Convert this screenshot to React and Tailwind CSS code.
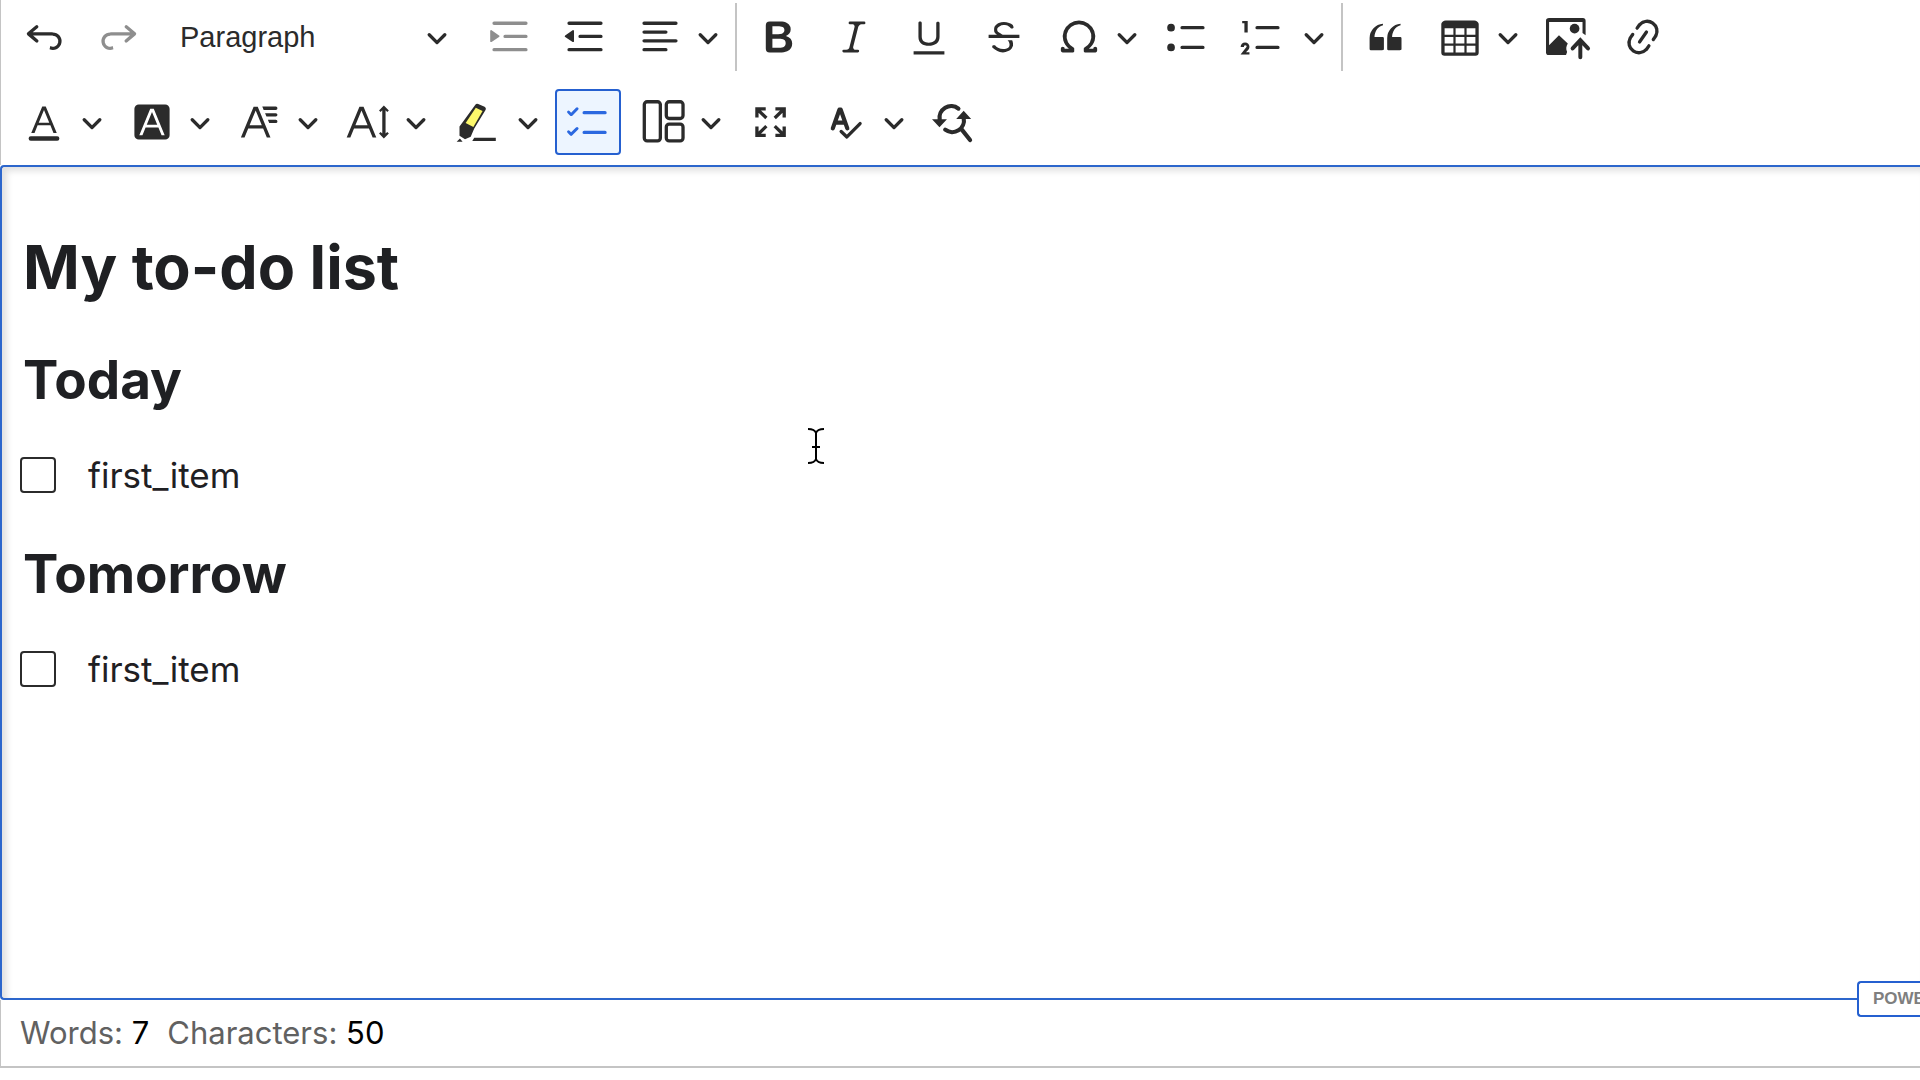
import React, { useState } from "react";

const LINE_TOP = "M2.75 3h14.5a.75.75 0 1 1 0 1.5H2.75a.75.75 0 0 1 0-1.5z";

const icons = {
  undo: "m5.042 9.367 2.189 1.837a.75.75 0 0 1-.965 1.149l-3.788-3.18a.747.747 0 0 1-.21-.284.75.75 0 0 1 .17-.945L6.23 4.762a.75.75 0 1 1 .964 1.15L4.863 7.866h8.917A.75.75 0 0 1 14 7.9a4 4 0 1 1-1.477 7.718l.344-1.489a2.5 2.5 0 1 0 1.094-4.73l.008-.032H5.042z",
  redo: "m14.958 9.367-2.189 1.837a.75.75 0 0 0 .965 1.149l3.788-3.18a.747.747 0 0 0 .21-.284.75.75 0 0 0-.17-.945L13.77 4.762a.75.75 0 1 0-.964 1.15l2.331 1.955H6.22A.75.75 0 0 0 6 7.9a4 4 0 1 0 1.477 7.718l-.344-1.489A2.5 2.5 0 1 1 6.039 9.4l-.008-.032h8.927z",
  indent: LINE_TOP + "M7.75 9h9.5a.75.75 0 1 1 0 1.5h-9.5a.75.75 0 0 1 0-1.5zM2.75 15h14.5a.75.75 0 1 1 0 1.5H2.75a.75.75 0 0 1 0-1.5zM1.632 6.95 5.02 9.358a.4.4 0 0 1-.013.661l-3.39 2.207A.4.4 0 0 1 1 11.892V7.275a.4.4 0 0 1 .632-.326z",
  outdent: LINE_TOP + "M7.75 9h9.5a.75.75 0 1 1 0 1.5h-9.5a.75.75 0 0 1 0-1.5zM2.75 15h14.5a.75.75 0 1 1 0 1.5H2.75a.75.75 0 0 1 0-1.5zM4.368 6.95.98 9.358a.4.4 0 0 0 .013.661l3.39 2.207A.4.4 0 0 0 5 11.892V7.275a.4.4 0 0 0-.632-.326z",
  alignLeft: LINE_TOP + "M2.75 7h9.93a.75.75 0 1 1 0 1.5H2.75a.75.75 0 0 1 0-1.5zM2.75 11h14.5a.75.75 0 1 1 0 1.5H2.75a.75.75 0 0 1 0-1.5zM2.75 15h9.93a.75.75 0 1 1 0 1.5H2.75a.75.75 0 0 1 0-1.5z",
  bold: "M10.187 17H5.773c-.637 0-1.092-.138-1.364-.415-.273-.277-.409-.718-.409-1.323V4.738c0-.617.14-1.062.419-1.332.279-.27.73-.406 1.354-.406h4.68c.69 0 1.288.041 1.793.124.506.083.96.242 1.36.478.341.197.644.447.906.75a3.262 3.262 0 0 1 .808 2.162c0 1.401-.722 2.426-2.167 3.075C15.05 10.175 16 11.315 16 13.01a3.756 3.756 0 0 1-2.296 3.504 6.1 6.1 0 0 1-1.517.377c-.571.073-1.238.11-2 .11zm-.217-6.217H7v4.087h3.069c1.977 0 2.965-.69 2.965-2.072 0-.707-.256-1.22-.768-1.537-.512-.319-1.277-.478-2.296-.478zM7 5.13v3.619h2.606c.729 0 1.292-.067 1.69-.2a1.6 1.6 0 0 0 .91-.765c.165-.267.247-.566.247-.897 0-.707-.26-1.176-.778-1.409-.519-.232-1.31-.348-2.375-.348H7z",
  italic: "m9.586 14.633.021.004c-.036.335.095.655.393.962.082.083.173.15.274.201h1.474a.6.6 0 1 1 0 1.2H5.304a.6.6 0 0 1 0-1.2h1.15c.474-.07.809-.182 1.005-.334.157-.122.291-.32.404-.597l2.416-9.55a1.053 1.053 0 0 0-.281-.823 1.12 1.12 0 0 0-.442-.296H8.15a.6.6 0 0 1 0-1.2h6.443a.6.6 0 1 1 0 1.2h-1.195c-.376.056-.65.155-.823.296-.215.175-.423.439-.623.79l-2.366 9.347z",
  underline: "M3 18v-1.5h14V18zM5.2 10V3.6c0-.4.4-.6.8-.6.3 0 .7.2.7.6v6.2c0 2 1.3 2.8 3.2 2.8 1.9 0 3.4-.9 3.4-2.9V3.6c0-.3.4-.5.8-.5.3 0 .7.2.7.5V10c0 2.7-2.2 4-4.9 4-2.6 0-4.7-1.2-4.7-4z",
  strikethrough: "M7 16.4c-.8-.4-1.5-.9-2.2-1.5a.6.6 0 0 1-.2-.5l.3-.6h1c1 1.2 2.1 1.7 3.7 1.7 1 0 1.8-.3 2.3-.6.6-.4.6-1.2.6-1.3.2-1.2-.9-2.1-.9-2.1h2.1c.3.7.4 1.2.4 1.7v.8l-.6 1.2c-.6.8-1.1 1-1.6 1.2a6 6 0 0 1-2.4.6c-1 0-1.8-.3-2.5-.6zM6.8 9 6 8.3c-.4-.5-.5-.8-.5-1.6 0-.7.1-1.3.5-1.8.4-.6 1-1 1.6-1.3a6.3 6.3 0 0 1 4.7 0 4 4 0 0 1 1.7 1l.3.7c0 .1.2.4-.2.7-.4.2-.9.1-1 0a3 3 0 0 0-1.2-1c-.4-.2-1-.3-2-.4-.7 0-1.4.2-2 .6-.8.6-1 .8-1 1.5 0 .8.5 1 1.2 1.5.6.4 1.1.7 1.9 1H6.8zM3 10.5V9h14v1.5z",
  omega: "M10 2.5a7.47 7.47 0 0 1 4.231 1.31 7.268 7.268 0 0 1 2.703 3.454 7.128 7.128 0 0 1 .199 4.353c-.39 1.436-1.475 2.72-2.633 3.677h2.013c0-.226.092-.443.254-.603a.876.876 0 0 1 1.229 0c.163.16.254.377.254.603v.853c0 .209-.078.41-.22.567a.873.873 0 0 1-.547.28l-.101.006h-4.695a.517.517 0 0 1-.516-.518v-1.265c0-.21.128-.398.317-.489a5.601 5.601 0 0 0 2.492-2.371 5.459 5.459 0 0 0 .552-3.693 5.53 5.53 0 0 0-1.955-3.2A5.71 5.71 0 0 0 10 4.206 5.708 5.708 0 0 0 6.419 5.46 5.527 5.527 0 0 0 4.46 8.663a5.457 5.457 0 0 0 .554 3.695 5.6 5.6 0 0 0 2.497 2.37.55.55 0 0 1 .317.49v1.264c0 .286-.23.518-.516.518H2.618a.877.877 0 0 1-.614-.25.845.845 0 0 1-.254-.603v-.853c0-.226.091-.443.254-.603a.876.876 0 0 1 1.228 0c.163.16.255.377.255.603h1.925c-1.158-.958-2.155-2.241-2.545-3.678a7.128 7.128 0 0 1 .199-4.352 7.268 7.268 0 0 1 2.703-3.455A7.475 7.475 0 0 1 10 2.5z",
  bulleted: "M7.75 5h9.5a.75.75 0 1 1 0 1.5h-9.5a.75.75 0 0 1 0-1.5zM1 5.75a1.75 1.75 0 1 1 3.5 0 1.75 1.75 0 0 1-3.5 0zM7.75 14h9.5a.75.75 0 1 1 0 1.5h-9.5a.75.75 0 0 1 0-1.5zM1 14.75a1.75 1.75 0 1 1 3.5 0 1.75 1.75 0 0 1-3.5 0z",
  numbered: "M7.75 5h9.5a.75.75 0 1 1 0 1.5h-9.5a.75.75 0 0 1 0-1.5zM7.75 14h9.5a.75.75 0 1 1 0 1.5h-9.5a.75.75 0 0 1 0-1.5zM3.5 2.7V8H2V3.7H1v-1zM.343 17.857l2.59-3.257H2.92a.6.6 0 1 0-1.04 0H.302a2 2 0 1 1 3.995 0h-.001c-.048.405-.16.734-.333.988-.175.254-.59.692-1.244 1.312H4.3v1h-4z",
  quote: "M3 10.423a6.5 6.5 0 0 1 6.056-6.408l.038.67C6.448 5.423 5.354 7.663 5.22 10H9c.552 0 .5.432.5.986v4.511c0 .554-.448.503-1 .503h-5c-.552 0-.5-.449-.5-1.003v-4.574zm8 0a6.5 6.5 0 0 1 6.056-6.408l.038.67c-2.646.739-3.74 2.979-3.873 5.315H17c.552 0 .5.432.5.986v4.511c0 .554-.448.503-1 .503h-5c-.552 0-.5-.449-.5-1.003v-4.574z",
  table: "M3 6v3h4V6H3zm0 4v3h4v-3H3zm0 4v3h4v-3H3zm5 3h4v-3H8v3zm5 0h4v-3h-4v3zm4-4v-3h-4v3h4zm0-4V6h-4v3h4zm1.5 8a1.5 1.5 0 0 1-1.5 1.5H3A1.5 1.5 0 0 1 1.5 17V4c.222-.863 1.068-1.5 2-1.5h13c.932 0 1.778.637 2 1.5v13zM12 13v-3H8v3h4zm0-4V6H8v3h4z",
  link: "m11.077 15 .991-1.416a.75.75 0 1 1 1.229.86l-1.148 1.64a.748.748 0 0 1-.217.206 5.251 5.251 0 0 1-8.503-5.955.741.741 0 0 1 .12-.274l1.147-1.639a.75.75 0 1 1 1.228.86L4.933 10.7l.006.003a3.75 3.75 0 0 0 6.132 4.294l.006.004zm5.494-5.335a.748.748 0 0 1-.12.274l-1.147 1.639a.75.75 0 1 1-1.228-.86l.86-1.23a3.75 3.75 0 0 0-6.144-4.301l-.86 1.229a.75.75 0 0 1-1.229-.86l1.148-1.64a.748.748 0 0 1 .217-.206 5.251 5.251 0 0 1 8.503 5.955zm-4.563-2.532a.75.75 0 0 1 .184 1.045l-3.155 4.505a.75.75 0 1 1-1.229-.86l3.155-4.506a.75.75 0 0 1 1.045-.184z",
  fontColor: "M12.4 10.3 10 4.5l-2.4 5.8h4.8zm.5 1.2H7.1L5.7 15H4.2l5-12h1.6l5 12h-1.5l-1.4-3.5zm3.1 7H4a1 1 0 0 1 0-2h12a1 1 0 0 1 0 2z",
  fontBackground: "M4 2h12a2 2 0 0 1 2 2v12a2 2 0 0 1-2 2H4a2 2 0 0 1-2-2V4a2 2 0 0 1 2-2zm8.38 9.262H7.62L10 5.506l2.38 5.756zm.532 1.285L14.34 16h1.426L10.804 4H9.196L4.234 16H5.66l1.428-3.453h5.824z",
  fontFamily: "M11.03 3h6.149a.75.75 0 1 1 0 1.5h-5.514L11.03 3zm1.27 3h4.879a.75.75 0 1 1 0 1.5h-4.244L12.3 6zm1.27 3h3.609a.75.75 0 1 1 0 1.5h-2.973L13.57 9zm-2.754 2.5L8.038 4.785 5.261 11.5h5.555zm.62 1.5H4.641l-1.666 4.028H1.312l5.789-14h1.875l5.789 14h-1.663L11.436 13z",
  fontSize: "M9.816 11.5 7.038 4.785 4.261 11.5h5.555zm.62 1.5H3.641l-1.666 4.028H.312l5.789-14h1.875l5.789 14h-1.663L10.436 13zm7.55 2.279.779-.779.707.707-2.265 2.265-2.193-2.265.707-.707.765.765V4.825c0-.042 0-.083.002-.123l-.77.77-.707-.707L17.207 2.5l2.265 2.265-.707.707-.782-.782c.002.043.003.089.003.135v10.454z",
  todo: "m2.315 14.705 2.224-2.24a.689.689 0 0 1 .963 0 .664.664 0 0 1 0 .949L2.865 16.07a.682.682 0 0 1-.112.089.647.647 0 0 1-.852-.051L.688 14.886a.635.635 0 0 1 0-.903.647.647 0 0 1 .91 0l.717.722zm5.185.045a.75.75 0 0 1 .75-.75h9.5a.75.75 0 1 1 0 1.5h-9.5a.75.75 0 0 1-.75-.75zM2.329 5.745l2.21-2.226a.689.689 0 0 1 .963 0 .664.664 0 0 1 0 .95L2.865 7.125a.685.685 0 0 1-.496.196.644.644 0 0 1-.468-.187L.688 5.912a.635.635 0 0 1 0-.903.647.647 0 0 1 .91 0l.73.736zM7.5 5.75A.75.75 0 0 1 8.25 5h9.5a.75.75 0 1 1 0 1.5h-9.5a.75.75 0 0 1-.75-.75z",
};

// Icons that need strokes or more than one colour
const drawings = {
  imageUpload: (
    <>
      <path d="M1.4 1.4h15.4c.7 0 1.2.5 1.2 1.2v6.6l-1.4-1V3.2H1.4v10.600l4.500-4.600 4 3.800c-.8 1.400-.9 2.600-.3 3.800l-.5 1.400H1.200C.5 18.200 0 17.700 0 17V2.600c0-.7.5-1.200 1.400-1.200z" />
      <circle cx="13" cy="6.200" r="2.200" />
      <path d="M15.600 19.200v-7.400M12.100 15.200l3.500-3.800 3.500 3.800" fill="none" stroke="currentColor" strokeWidth="1.800" strokeLinecap="round" />
    </>
  ),
  highlight: (
    <>
      <path d="M9.700 2.200a1 1 0 0 1 1.300-.4l2.900 1.300a1 1 0 0 1 .5 1.300L9.200 12.900l-1.600 3.800L5 17.800l-2.500-1.600V12L5 8.600z" />
      <path d="m9.900 3.500 3.100 1.500-4.200 7.300-3.500-1.900z" fill="#fdf86b" />
      <path d="M2.700 17.500 3.900 19H1.200zM9.200 17.200H19v1.400H8.300z" />
    </>
  ),
  layout: (
    <g fill="none" stroke="currentColor" strokeWidth="1.500">
      <rect x="1.500" y=".8" width="7.300" height="17.800" rx="1.300" />
      <rect x="11.500" y=".8" width="7.600" height="7.600" rx="1.300" />
      <rect x="11.500" y="11" width="7.600" height="7.600" rx="1.300" />
    </g>
  ),
  fullscreen: (
    <path d="M3.600 8V4h4M3.800 4.200 7.900 8.200M12 4h4v4M15.800 4.200l-4.100 4M3.600 12v4.100h4M3.800 15.900l4.100-4M12 16.100h4V12M15.800 15.900l-4.100-4" fill="none" stroke="currentColor" strokeWidth="1.500" />
  ),
  spelling: (
    <g fill="none" stroke="currentColor" strokeLinecap="round" strokeLinejoin="round">
      <path d="m4 12.900 3-8.500h.6l3 8.500M5.200 10.300h4.300" strokeWidth="1.900" />
      <path d="m7.800 14.300 2.600 2.500 6-6.100" strokeWidth="1.500" />
    </g>
  ),
  find: (
    <>
      <path d="M12 3.900A5.300 5.300 0 0 0 3.500 9M6 13.500a5.300 5.300 0 0 0 8.400-5.300M13.200 13l4.100 5.200" fill="none" stroke="currentColor" strokeWidth="1.900" strokeLinecap="round" />
      <path d="M0 8.700h6.800l-3.400 3.700zM11 8.600h6.800l-3.400-3.700z" />
    </>
  ),
};

const Icon = ({ name }) => (
  <svg viewBox="0 0 20 20" className="size-11 shrink-0 overflow-visible" fill="currentColor" aria-hidden="true">
    {icons[name] ? <path d={icons[name]} fillRule={name === "bold" ? "evenodd" : "nonzero"} /> : drawings[name]}
  </svg>
);

const Chevron = () => (
  <svg viewBox="0 0 10 10" className="size-[22px] shrink-0" fill="currentColor" aria-hidden="true">
    <path d="M.941 4.523a.75.75 0 1 1 1.060-1.060l3.006 3.005 3.005-3.005a.75.75 0 1 1 1.060 1.060l-3.549 3.550a.75.75 0 0 1-1.060 0z" />
  </svg>
);

const ToolButton = ({ icon, label, disabled }) => (
  <button
    type="button"
    aria-label={label}
    disabled={disabled}
    className="flex size-[66px] shrink-0 items-center justify-center rounded-sm disabled:text-[#8e8e8e]"
  >
    <Icon name={icon} />
  </button>
);

const DropdownButton = ({ icon, label }) => (
  <button type="button" aria-label={label} className="flex h-[66px] w-[99px] shrink-0 items-center gap-[15px] rounded-sm pl-[11px]">
    <Icon name={icon} />
    <Chevron />
  </button>
);

const SplitButton = ({ icon, label }) => (
  <div className="flex shrink-0">
    <ToolButton icon={icon} label={label} />
    <button type="button" aria-label={`${label} options`} className="flex h-[66px] w-[37px] items-center justify-center">
      <Chevron />
    </button>
  </div>
);

const Separator = () => <div className="h-[68px] w-[2px] shrink-0 bg-[#c4c4c4]" />;

const TodoItem = ({ id, text }) => {
  const [done, setDone] = useState(false);
  return (
    <li className="flex items-center gap-8">
      <input
        id={id}
        type="checkbox"
        checked={done}
        onChange={(e) => setDone(e.target.checked)}
        className="size-9 shrink-0 appearance-none rounded border-2 border-[#2b2b2b] checked:bg-[#25ab33]"
      />
      <label htmlFor={id} className="text-[35px] leading-10">
        {text}
      </label>
    </li>
  );
};

export default function App() {
  const [style, setStyle] = useState("Paragraph");

  return (
    <div className="relative w-full overflow-hidden bg-white font-['Inter',sans-serif] text-[#1f2023]">
      {/* TOOLBAR */}
      <div role="toolbar" aria-label="Editor toolbar" className="space-y-[18px] border-l border-[#c4c4c4] pt-[3px] pb-[10px] pl-[10px] text-[#2b2b2b]">
        <div className="flex items-center gap-[9px]">
          <ToolButton icon="undo" label="Undo" />
          <ToolButton icon="redo" label="Redo" disabled />
          <div className="relative w-[307px] shrink-0 font-['Liberation_Sans',sans-serif] text-[29px]">
            <select
              aria-label="Heading"
              value={style}
              onChange={(e) => setStyle(e.target.value)}
              className="h-[66px] w-full appearance-none bg-transparent pl-[19px] leading-9"
            >
              <option>Paragraph</option>
            </select>
            <div className="pointer-events-none absolute inset-y-0 right-5 flex items-center">
              <Chevron />
            </div>
          </div>
          <ToolButton icon="indent" label="Increase indent" disabled />
          <ToolButton icon="outdent" label="Decrease indent" />
          <DropdownButton icon="alignLeft" label="Text alignment" />
          <Separator />
          <ToolButton icon="bold" label="Bold" />
          <ToolButton icon="italic" label="Italic" />
          <ToolButton icon="underline" label="Underline" />
          <ToolButton icon="strikethrough" label="Strikethrough" />
          <DropdownButton icon="omega" label="Special characters" />
          <ToolButton icon="bulleted" label="Bulleted list" />
          <SplitButton icon="numbered" label="Numbered list" />
          <Separator />
          <ToolButton icon="quote" label="Block quote" />
          <DropdownButton icon="table" label="Insert table" />
          <ToolButton icon="imageUpload" label="Upload image" />
          <ToolButton icon="link" label="Link" />
        </div>

        <div className="flex items-center gap-[9px]">
          <DropdownButton icon="fontColor" label="Font color" />
          <DropdownButton icon="fontBackground" label="Font background color" />
          <DropdownButton icon="fontFamily" label="Font family" />
          <DropdownButton icon="fontSize" label="Font size" />
          <SplitButton icon="highlight" label="Highlight" />
          <button
            type="button"
            aria-label="To-do list"
            aria-pressed="true"
            className="flex size-[66px] shrink-0 items-center justify-center rounded border-2 border-[#2560d0] bg-[#edf5ff] text-[#2b68e0]"
          >
            <Icon name="todo" />
          </button>
          <DropdownButton icon="layout" label="Table layout" />
          <ToolButton icon="fullscreen" label="Fullscreen" />
          <DropdownButton icon="spelling" label="Spelling" />
          <ToolButton icon="find" label="Find and replace" />
        </div>
      </div>

      {/* CONTENT */}
      <main className="relative min-h-[835px] rounded-l border-2 border-r-0 border-[#2c66cc] pt-[62px] pl-[21px] shadow-[inset_5px_4px_6px_rgba(0,0,0,0.12)]">
        <h1 className="text-[61px] leading-[76px] font-bold">My to-do list</h1>
        <section className="mt-[42px]">
          <h2 className="text-[53px] leading-[66px] font-bold">Today</h2>
          <ul className="mt-[42px] -ml-[3px]">
            <TodoItem id="today-1" text="first_item" />
          </ul>
        </section>
        <section className="mt-[46px]">
          <h2 className="text-[53px] leading-[66px] font-bold">Tomorrow</h2>
          <ul className="mt-[42px] -ml-[3px]">
            <TodoItem id="tomorrow-1" text="first_item" />
          </ul>
        </section>

        {/* badge sitting on the bottom border */}
        <div className="absolute right-0 -bottom-[19px] flex h-9 w-[63px] items-center rounded-l border-2 border-r-0 border-[#2560d0] bg-white pl-[14px] font-['Liberation_Sans',sans-serif] text-[17px] font-bold text-[#7f7f7f]">
          POWE
        </div>
      </main>

      {/* WORD COUNT */}
      <footer className="flex gap-[18px] border-b-2 border-l border-[#c4c4c4] py-[13px] pl-[19px] text-[31px] leading-10 text-[#616161]">
        <p>
          Words: <span className="text-black">7</span>
        </p>
        <p>
          Characters: <span className="text-black">50</span>
        </p>
      </footer>

      {/* text cursor */}
      <svg viewBox="0 0 16 36" className="absolute top-[428px] left-[808px] h-9 w-4" fill="none" stroke="#000" strokeWidth="2" aria-hidden="true">
        <path d="M0 1c4 0 7 1 8 4 1-3 4-4 8-4M8 5v26M0 35c4 0 7-1 8-4 1 3 4 4 8 4M4 19h8" />
      </svg>
    </div>
  );
}
